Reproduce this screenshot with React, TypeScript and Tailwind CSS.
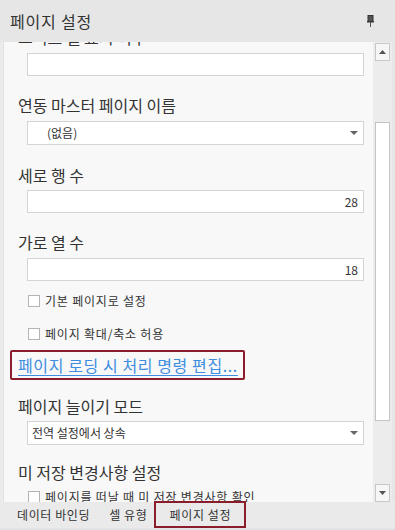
import React from 'react';

const Label = ({ children, className = '' }: { children: React.ReactNode; className?: string }) => (
  <div className={`h-[22px] pl-[14px] flex items-center text-[16px] text-[#333] whitespace-nowrap ${className}`}>{children}</div>
);

const Input = ({ value = '', className = '' }: { value?: string; className?: string }) => (
  <div className={`ml-[23px] mr-[9px] h-[23px] bg-white border border-[#d4d4d4] flex items-center justify-end pr-[5px] text-[12px] text-[#333] ${className}`}>
    {value}
  </div>
);

const Select = ({ value, indent, className = '' }: { value: string; indent: string; className?: string }) => (
  <div className={`ml-[23px] mr-[9px] h-[24px] bg-white border border-[#d4d4d4] flex items-center justify-between pr-[5px] text-[12px] text-[#333] ${indent} ${className}`}>
    <span>{value}</span>
    <svg width="8" height="5" viewBox="0 0 8 5">
      <path d="M0 0 L8 0 L4 4 Z" fill="#666" />
    </svg>
  </div>
);

const Check = ({ label, className = '' }: { label: string; className?: string }) => (
  <div className={`h-[20px] pl-[24px] flex items-center gap-[5px] text-[12px] text-[#333] whitespace-nowrap tracking-[0.8px] ${className}`}>
    <span className="w-[12px] h-[12px] bg-white border border-[#b4b4b4]" />
    <span>{label}</span>
  </div>
);

export default function App() {
  return (
    <div
      className="w-[395px] h-[530px] bg-[#ebebeb] flex flex-col overflow-hidden"
      style={{ fontFamily: '"Noto Sans CJK KR", "Noto Sans", sans-serif' }}
    >
      {/* header */}
      <div className="h-[42px] shrink-0 flex items-center justify-between pl-[10px] pr-[21px] bg-[#e6e6e6]">
        <span className="text-[16px] text-[#333] tracking-[0.8px]">페이지 설정</span>
        <svg width="7" height="12" viewBox="0 0 7 12">
          <rect x="1" y="0.5" width="5" height="6" fill="#555" stroke="#333" />
          <rect x="0" y="6" width="7" height="1.5" fill="#333" />
          <rect x="3" y="7" width="1" height="5" fill="#555" />
        </svg>
      </div>

      {/* body */}
      <div className="flex-1 flex min-h-0">
        <div className="ml-[3px] w-[370px] bg-[#f8f8f8] border-l border-[#e2e2e2] overflow-hidden">
          <div className="-mt-[16px] flex flex-col">
            <Label>그리드 셀 표시 여부</Label>
            <Input className="mt-[5px]" />

            <Label className="mt-[18px]">연동 마스터 페이지 이름</Label>
            <Select className="mt-[5px]" value="(없음)" indent="pl-[19px]" />

            <Label className="mt-[19px]">세로 행 수</Label>
            <Input className="mt-[4px]" value="28" />

            <Label className="mt-[18px]">가로 열 수</Label>
            <Input className="mt-[5px] h-[22px]" value="18" />

            <Check className="mt-[10px]" label="기본 페이지로 설정" />
            <Check className="mt-[13px]" label="페이지 확대/축소 허용" />

            <div className="mt-[6px] ml-[6px] w-[235px] h-[30px] border-[2px] border-[#8b1c2b] rounded-[2px] flex items-center pl-[6px]">
              <span className="text-[16px] text-[#3d8de0] underline underline-offset-[3px] whitespace-nowrap tracking-[0.6px]">
                페이지 로딩 시 처리 명령 편집...
              </span>
            </div>

            <Label className="mt-[15px]">페이지 늘이기 모드</Label>
            <Select className="mt-[4px] h-[23px]" value="전역 설정에서 상속" indent="pl-[4px]" />

            <Label className="mt-[16px]">미 저장 변경사항 설정</Label>
            <Check className="mt-[4px]" label="페이지를 떠날 때 미 저장 변경사항 확인" />
          </div>
        </div>

        {/* scrollbar */}
        <div className="w-[19px] bg-[#ececec] flex flex-col items-center pt-[1px]">
          <div className="w-[15px] h-[18px] bg-[#f6f6f6] border border-[#c8c8c8] flex items-center justify-center">
            <svg width="7" height="4" viewBox="0 0 7 4">
              <path d="M0 4 L7 4 L3.5 0 Z" fill="#555" />
            </svg>
          </div>
          <div className="mt-[61px] w-[15px] h-[299px] bg-white border border-[#c4c4c4]" />
          <div className="flex-1" />
          <div className="w-[15px] h-[18px] bg-[#f6f6f6] border border-[#c8c8c8] flex items-center justify-center">
            <svg width="7" height="4" viewBox="0 0 7 4">
              <path d="M0 0 L7 0 L3.5 4 Z" fill="#555" />
            </svg>
          </div>
        </div>
        <div className="w-[3px] bg-[#e6e6e6]" />
      </div>

      {/* tabs */}
      <div className="h-[28px] shrink-0 flex items-center bg-[#eaeaea] border-b-[2px] border-[#dfe3e8] text-[12px] text-[#333] tracking-[0.6px]">
        <span className="ml-[17px] whitespace-nowrap">데이터 바인딩</span>
        <span className="ml-[19px] whitespace-nowrap">셀 유형</span>
        <span className="ml-[7px] w-[92px] h-[27px] -mt-[1px] border-[2px] border-[#8b1c2b] flex items-center justify-center whitespace-nowrap">
          페이지 설정
        </span>
      </div>
    </div>
  );
}
